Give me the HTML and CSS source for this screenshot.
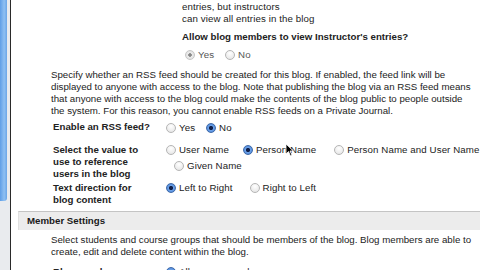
FILE: index.html
```html
<!DOCTYPE html>
<html>
<head>
<meta charset="utf-8">
<link rel="stylesheet" href="styles.css">
</head>
<body>
<div class="page">
  <div class="side"><div class="sidebar-bar"></div></div>
  <div class="main">
    <div class="sub">
      <div class="line">entries, but instructors</div>
      <div class="line">can view all entries in the blog</div>
      <div class="q">Allow blog members to view Instructor's entries?</div>
      <div class="opts dim">
        <span class="opt"><span class="radio on-dim"></span>Yes</span>
        <span class="opt"><span class="radio"></span>No</span>
      </div>
    </div>
    <p class="desc">Specify whether an RSS feed should be created for this blog. If enabled, the feed link will be<br>displayed to anyone with access to the blog. Note that publishing the blog via an RSS feed means<br>that anyone with access to the blog could make the contents of the blog public to people outside<br>the system. For this reason, you cannot enable RSS feeds on a Private Journal.</p>
    <div class="row r-rss">
      <div class="label">Enable an RSS feed?</div>
      <div class="opts">
        <span class="opt"><span class="radio"></span>Yes</span>
        <span class="opt"><span class="radio sel"></span>No</span>
      </div>
    </div>
    <div class="row r-name">
      <div class="label">Select the value to use to reference users in the blog</div>
      <div class="opts wrap">
        <span class="opt o1"><span class="radio"></span>User Name</span>
        <span class="opt o2"><span class="radio sel"></span>Person Name</span>
        <span class="opt o3"><span class="radio"></span>Person Name and User Name</span>
        <span class="opt o4"><span class="radio"></span>Given Name</span>
      </div>
    </div>
    <div class="row r-dir">
      <div class="label">Text direction for blog content</div>
      <div class="opts">
        <span class="opt d1"><span class="radio sel"></span>Left to Right</span>
        <span class="opt"><span class="radio"></span>Right to Left</span>
      </div>
    </div>
    <div class="section">
      <div class="sec-head">Member Settings</div>
      <p class="desc sec-desc">Select students and course groups that should be members of the blog. Blog members are able to<br>create, edit and delete content within the blog.</p>
      <div class="row r-mem">
        <div class="label">Blog members.</div>
        <div class="opts">
          <span class="opt"><span class="radio sel"></span>All course members</span>
        </div>
      </div>
    </div>
  </div>
</div>
<svg class="cursor" width="9" height="14" viewBox="0 0 9 14"><path d="M1 1 L1 11 L3.5 8.5 L5.5 13 L7 12.3 L5 8 L8.3 8 Z" fill="#000" stroke="#fff" stroke-width="0.8"/></svg>
</body>
</html>
```
FILE: styles.css
```css
html, body {
  margin: 0;
  padding: 0;
  background: #fff;
  width: 480px;
  height: 270px;
  overflow: hidden;
  font-family: "Liberation Sans", Arial, sans-serif;
  font-size: 9.7px;
  letter-spacing: 0.1px;
  color: #222;
}
.page {
  display: flex;
  height: 270px;
}
.side {
  width: 10px;
  flex: none;
  background: #e9ebee;
  border-right: 1px solid #2a2a2a;
}
.sidebar-bar {
  width: 7px;
  height: 201px;
  background: linear-gradient(to right, #5f9ee6, #8fc0f2 60%, #6aa6e8);
  border-radius: 0 0 3px 0;
}
.main {
  flex: 1;
  min-width: 0;
  padding-top: 1px;
}
.sub {
  padding-left: 171px;
}
.line {
  line-height: 12px;
}
.q {
  font-weight: bold;
  letter-spacing: 0;
  margin-top: 6px;
  line-height: 12px;
}
.opts {
  display: flex;
  align-items: center;
  line-height: 12px;
}
.sub .opts {
  margin-top: 6px;
  padding-left: 3px;
}
.dim {
  color: #555;
}
.opt {
  display: inline-flex;
  align-items: center;
  margin-right: 11px;
  white-space: nowrap;
}
.radio {
  display: inline-block;
  width: 8px;
  height: 8px;
  border-radius: 50%;
  border: 1px solid #b5b5b5;
  background: radial-gradient(circle at 50% 30%, #ffffff, #e2e2e2);
  margin-right: 3px;
  box-sizing: content-box;
  flex: none;
}
.radio.sel {
  border-color: #3f6aa8;
  background: radial-gradient(circle, #10204a 0 1.8px, #6fa3e8 2.4px, #3c7ad4 100%);
}
.radio.on-dim {
  background: radial-gradient(circle, #888 0 1.5px, #ececec 2px, #dcdcdc 100%);
  border-color: #c6c6c6;
}
.desc {
  margin: 8px 0 0 0;
  padding-left: 40px;
  line-height: 12px;
  white-space: nowrap;
  letter-spacing: 0;
}
.row {
  display: flex;
  padding-left: 42px;
  line-height: 12px;
}
.label {
  width: 113px;
  flex: none;
  font-weight: bold;
  letter-spacing: 0;
  padding-right: 12px;
  box-sizing: border-box;
}
.r-rss {
  margin-top: 4px;
}
.r-rss .opts {
  margin-top: 1px;
}
.r-name {
  margin-top: 10px;
}
.wrap {
  flex-wrap: wrap;
  align-content: flex-start;
  align-items: center;
}
.o1 { margin-right: 14px; }
.o2 { margin-right: 18px; }
.o3 { margin-right: 0; }
.o4 { margin-left: 8px; margin-top: 4px; }
.r-dir {
  margin-top: 2px;
}
.r-dir .opts {
  align-items: flex-start;
}
.d1 { margin-right: 17px; }
.section {
  margin-top: 5px;
  margin-left: 7px;
}
.sec-head {
  background: #ececec;
  border-top: 1px solid #c4c4c4;
  border-left: 1px solid #e0e0e0;
  font-weight: bold;
  letter-spacing: 0;
  padding-left: 8px;
  height: 18px;
  line-height: 18px;
  color: #1a1a1a;
}
.sec-desc {
  margin-top: 4px;
  padding-left: 33px;
}
.r-mem {
  margin-top: 8px;
  padding-left: 35px;
}
.cursor {
  position: absolute;
  left: 285px;
  top: 143px;
}
```
